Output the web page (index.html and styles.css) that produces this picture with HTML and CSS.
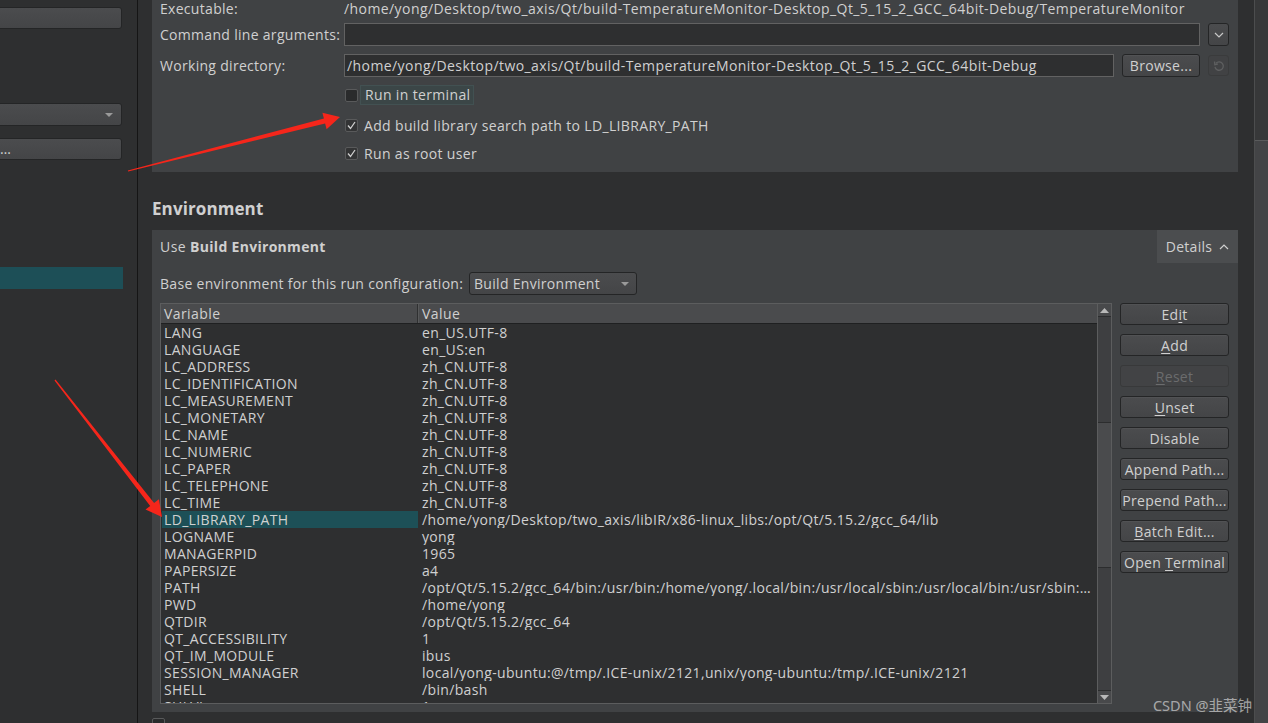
FILE: index.html
```html
<!DOCTYPE html>
<html>
<head>
<meta charset="utf-8">
<link rel="stylesheet" href="styles.css">
</head>
<body>
<div class="app">
  <aside class="side">
    <div class="sbtn s1"></div>
    <div class="scombo"><span class="stri"></span></div>
    <div class="sbtn s2"><span>…</span></div>
    <div class="ssel"></div>
  </aside>
  <main class="main">
    <section class="runpanel">
      <div class="row r1"><span class="lbl">Executable:</span><span class="val">/home/yong/Desktop/two_axis/Qt/build-TemperatureMonitor-Desktop_Qt_5_15_2_GCC_64bit-Debug/TemperatureMonitor</span></div>
      <div class="row r2"><span class="lbl">Command line arguments:</span><div class="input argin"></div><div class="tbtn"><svg width="10" height="6" viewBox="0 0 10 6"><polyline points="1,1 5,5 9,1" fill="none" stroke="#c8c8c8" stroke-width="1.2"/></svg></div></div>
      <div class="row r3"><span class="lbl">Working directory:</span><div class="input dirin">/home/yong/Desktop/two_axis/Qt/build-TemperatureMonitor-Desktop_Qt_5_15_2_GCC_64bit-Debug</div><div class="btn browse"><span>Browse...</span></div><div class="tbtn dis"><svg width="12" height="12" viewBox="0 0 12 12"><path d="M3 3.2 A4.2 4.2 0 1 1 2 7" fill="none" stroke="#5e5f60" stroke-width="1.3"/><polyline points="1.5,1.5 1.8,4.6 4.8,4" fill="none" stroke="#5e5f60" stroke-width="1.3"/></svg></div></div>
      <div class="row chk r4"><span class="box"></span><span class="focus">Run in terminal</span></div>
      <div class="row chk r5"><span class="box on"><svg width="11" height="11" viewBox="0 0 11 11"><polyline points="2,5.5 4.5,8.5 9,2" fill="none" stroke="#d0d0d0" stroke-width="1.3"/></svg></span><span class="ctext">Add build library search path to LD_LIBRARY_PATH</span></div>
      <div class="row chk r6"><span class="box on"><svg width="11" height="11" viewBox="0 0 11 11"><polyline points="2,5.5 4.5,8.5 9,2" fill="none" stroke="#d0d0d0" stroke-width="1.3"/></svg></span><span class="ctext">Run as root user</span></div>
    </section>
    <h2 class="envh">Environment</h2>
    <section class="envpanel">
      <div class="envhead">
        <span class="usebuild">Use <b>Build Environment</b></span>
        <div class="details"><span>Details</span><svg width="10" height="6" viewBox="0 0 10 6"><polyline points="1,5 5,1 9,5" fill="none" stroke="#d0d0d0" stroke-width="1.2"/></svg></div>
      </div>
      <div class="baserow"><span class="baselbl">Base environment for this run configuration:</span><div class="combo"><span>Build Environment</span><span class="tri"></span></div></div>
      <div class="envbody">
        <div class="table">
          <div class="tmain">
            <div class="thead"><div class="c1">Variable</div><div class="c2">Value</div></div>
            <div class="tbody">
              <div class="tr"><div class="c1">LANG</div><div class="c2">en_US.UTF-8</div></div>
              <div class="tr"><div class="c1">LANGUAGE</div><div class="c2">en_US:en</div></div>
              <div class="tr"><div class="c1">LC_ADDRESS</div><div class="c2">zh_CN.UTF-8</div></div>
              <div class="tr"><div class="c1">LC_IDENTIFICATION</div><div class="c2">zh_CN.UTF-8</div></div>
              <div class="tr"><div class="c1">LC_MEASUREMENT</div><div class="c2">zh_CN.UTF-8</div></div>
              <div class="tr"><div class="c1">LC_MONETARY</div><div class="c2">zh_CN.UTF-8</div></div>
              <div class="tr"><div class="c1">LC_NAME</div><div class="c2">zh_CN.UTF-8</div></div>
              <div class="tr"><div class="c1">LC_NUMERIC</div><div class="c2">zh_CN.UTF-8</div></div>
              <div class="tr"><div class="c1">LC_PAPER</div><div class="c2">zh_CN.UTF-8</div></div>
              <div class="tr"><div class="c1">LC_TELEPHONE</div><div class="c2">zh_CN.UTF-8</div></div>
              <div class="tr"><div class="c1">LC_TIME</div><div class="c2">zh_CN.UTF-8</div></div>
              <div class="tr sel"><div class="c1">LD_LIBRARY_PATH</div><div class="c2">/home/yong/Desktop/two_axis/libIR/x86-linux_libs:/opt/Qt/5.15.2/gcc_64/lib</div></div>
              <div class="tr"><div class="c1">LOGNAME</div><div class="c2">yong</div></div>
              <div class="tr"><div class="c1">MANAGERPID</div><div class="c2">1965</div></div>
              <div class="tr"><div class="c1">PAPERSIZE</div><div class="c2">a4</div></div>
              <div class="tr"><div class="c1">PATH</div><div class="c2">/opt/Qt/5.15.2/gcc_64/bin:/usr/bin:/home/yong/.local/bin:/usr/local/sbin:/usr/local/bin:/usr/sbin:…</div></div>
              <div class="tr"><div class="c1">PWD</div><div class="c2">/home/yong</div></div>
              <div class="tr"><div class="c1">QTDIR</div><div class="c2">/opt/Qt/5.15.2/gcc_64</div></div>
              <div class="tr"><div class="c1">QT_ACCESSIBILITY</div><div class="c2">1</div></div>
              <div class="tr"><div class="c1">QT_IM_MODULE</div><div class="c2">ibus</div></div>
              <div class="tr"><div class="c1">SESSION_MANAGER</div><div class="c2">local/yong-ubuntu:@/tmp/.ICE-unix/2121,unix/yong-ubuntu:/tmp/.ICE-unix/2121</div></div>
              <div class="tr"><div class="c1">SHELL</div><div class="c2">/bin/bash</div></div>
              <div class="tr"><div class="c1">SHLVL</div><div class="c2">1</div></div>
            </div>
          </div>
          <div class="vscroll">
            <div class="sarrow"><svg width="9" height="5" viewBox="0 0 9 5"><polygon points="0,5 4.5,0 9,5" fill="#b8b8b8"/></svg></div>
            <div class="shandle"></div>
            <div class="sgap"></div>
            <div class="sarrow"><svg width="9" height="5" viewBox="0 0 9 5"><polygon points="0,0 4.5,5 9,0" fill="#b8b8b8"/></svg></div>
          </div>
        </div>
        <div class="btns">
          <div class="btn"><span>Ed<u>i</u>t</span></div>
          <div class="btn"><span><u>A</u>dd</span></div>
          <div class="btn dis"><span><u>R</u>eset</span></div>
          <div class="btn"><span><u>U</u>nset</span></div>
          <div class="btn"><span>Disable</span></div>
          <div class="btn"><span>Append Path...</span></div>
          <div class="btn"><span>Prepend Path...</span></div>
          <div class="btn"><span><u>B</u>atch Edit...</span></div>
          <div class="btn"><span>Open <u>T</u>erminal</span></div>
        </div>
      </div>
    </section>
    <div class="lastchk"><span class="box"></span></div>
  </main>
  <div class="pscroll"><div class="phandle"></div></div>
</div>
<svg class="arrows" width="1268" height="723" viewBox="0 0 1268 723">
  <polygon fill="#f5261b" points="128.15,171.6 325.1,123.4 326.6,129.2 340,117 322.4,112.7 323.9,118.5 127.85,170.4"/>
  <polygon fill="#f5261b" points="54.5,380.4 150.2,505.9 145.5,509.6 162,517 158.9,499.2 154.1,502.9 55.5,379.6"/>
</svg>
<div class="wm">CSDN @韭菜钟</div>
</body>
</html>
```
FILE: styles.css
```css
* { box-sizing: border-box; margin: 0; padding: 0; }
html, body { width: 1268px; height: 723px; overflow: hidden; background: #2e2f30; }
body {
  font-family: "Open Sans", "Noto Sans", sans-serif;
  font-size: 14px;
  letter-spacing: 0.42px;
  color: #d0d0d0;
  position: relative;
}
.app { display: flex; height: 723px; }

/* left sidebar */
.side {
  width: 138px; flex: none;
  border-right: 1px solid #151515;
  display: flex; flex-direction: column;
  overflow: hidden;
}
.sbtn, .scombo {
  width: 131px; margin-left: -9px; height: 22px;
  border: 1px solid #242526; border-radius: 3px;
  background: linear-gradient(#4b4c4e, #444547);
}
.s1 { margin-top: 7px; }
.scombo { margin-top: 74px; height: 23px; display: flex; justify-content: flex-end; align-items: center; padding-right: 8px; }
.stri, .tri {
  width: 0; height: 0;
  border-left: 4px solid transparent; border-right: 4px solid transparent;
  border-top: 4px solid #9a9a9a;
}
.s2 { margin-top: 12px; display: flex; align-items: center; padding-left: 8px; line-height: 20px; }
.ssel { margin-top: 107px; width: 123px; height: 22px; background: #1d4f57; }

/* main */
.main { flex: 1; padding: 0 16px 0 14px; display: flex; flex-direction: column; overflow: hidden; }
.runpanel {
  background: #404244;
  display: flex; flex-direction: column;
  padding: 0 9px 9px 8px;
}
.row { display: flex; align-items: center; white-space: nowrap; }
.lbl { width: 184px; flex: none; letter-spacing: 0.3px; }
.r1 { margin-top: -3px; height: 22px; }
.r2 { margin-top: 4px; height: 23px; }
.r3 { margin-top: 8px; height: 23px; }
.input {
  height: 23px; background: #2e2f30;
  border: 1px solid #626262;
  display: flex; align-items: center; padding-left: 2px;
}
.argin { width: 856px; }
.dirin { width: 770px; }
.tbtn {
  margin-left: 8px; width: 21px; height: 23px;
  border: 1px solid #242526; border-radius: 3px;
  background: linear-gradient(#4b4c4e, #444547);
  display: flex; align-items: center; justify-content: center;
}
.tbtn.dis { background: #414244; border-color: #3a3b3c; height: 21px; }
.btn {
  height: 22px;
  border: 1px solid #242526; border-radius: 3px;
  background: linear-gradient(#4b4c4e, #444547);
  box-shadow: inset 0 1px 0 #515254;
  display: flex; align-items: center; justify-content: center;
  white-space: nowrap;
  letter-spacing: 0.3px;
}
.btn u { text-decoration-thickness: 1px; text-underline-offset: 2px; }
.btn.dis { background: #424345; border-color: #38393a; box-shadow: none; color: #6b6c6d; }
.browse { margin-left: 8px; width: 78px; height: 23px; }

.chk { height: 20px; padding-left: 185px; }
.r4 { margin-top: 8px; }
.r5 { margin-top: 10px; }
.r6 { margin-top: 8px; }
.box {
  width: 13px; height: 13px; flex: none;
  background: #2a2b2c; border: 1px solid #595a5b; border-radius: 2px;
  display: flex; align-items: center; justify-content: center;
}
.box.on { background: #333435; }
.focus {
  margin-left: 2px; padding: 0 3px 0 4px; height: 20px; line-height: 18px;
  background: #3b4647; border: 1px solid #425152;
  letter-spacing: 0.35px;
}
.ctext { margin-left: 6px; letter-spacing: 0.34px; }

/* environment */
.envh {
  margin-top: 25px; height: 24px; line-height: 24px;
  font-size: 17px; font-weight: 700; letter-spacing: 0.1px;
  margin-bottom: 9px;
}
.envpanel {
  background: #404244;
  display: flex; flex-direction: column;
  padding-bottom: 8px;
}
.envhead { height: 33px; display: flex; justify-content: space-between; align-items: center; padding-left: 8px; }
.usebuild b { font-weight: 700; letter-spacing: 0.3px; }
.details {
  width: 81px; height: 33px; background: #4b4d4f;
  display: flex; align-items: center; justify-content: center; gap: 7px;
  letter-spacing: 0.3px;
}
.baserow { margin-top: 9px; height: 23px; display: flex; align-items: center; padding-left: 8px; white-space: nowrap; }
.baselbl { width: 309px; flex: none; letter-spacing: 0.3px; }
.combo {
  width: 168px; height: 23px;
  border: 1px solid #242526; border-radius: 3px;
  background: linear-gradient(#4b4c4e, #444547);
  display: flex; align-items: center; justify-content: space-between;
  padding: 0 7px 0 4px;
  letter-spacing: 0.3px;
}
.envbody { margin-top: 8px; display: flex; padding: 0 9px 0 8px; }
.table {
  width: 953px; height: 401px;
  border: 1px solid #5c5d5e;
  background: #2e2f30;
  display: flex;
}
.tmain { flex: 1; overflow: hidden; display: flex; flex-direction: column; }
.thead {
  height: 20px; flex: none; display: flex;
  background: #4a4b4d; border-bottom: 1px solid #1f2021;
  line-height: 19px;
}
.thead .c1 { border-right: 1px solid #2f3031; box-shadow: 1px 0 0 #58595a; }
.tbody { flex: 1; overflow: hidden; letter-spacing: 0.34px; }
.tr { display: flex; height: 17px; line-height: 17px; white-space: nowrap; }
.c1 { width: 257px; flex: none; padding-left: 3px; overflow: hidden; }
.c2 { flex: 1; padding-left: 4px; overflow: hidden; }
.tr.sel .c1 { background: #1d5057; margin-left: 1px; padding-left: 2px; width: 256px; }
.vscroll {
  width: 14px; flex: none;
  border-left: 1px solid #5c5d5e;
  background: #3e3f41;
  display: flex; flex-direction: column;
}
.sarrow {
  height: 13px; flex: none;
  display: flex; align-items: center; justify-content: center;
  background: #48494b; border-bottom: 1px solid #2c2d2e;
}
.sarrow:last-child { border-bottom: none; border-top: 1px solid #2c2d2e; }
.shandle {
  margin-top: 105px; height: 146px; flex: none;
  background: #4a4b4d; border-top: 1px solid #2c2d2e; border-bottom: 1px solid #2c2d2e;
}
.sgap { flex: 1; }
.btns { margin-left: 8px; width: 109px; display: flex; flex-direction: column; gap: 9px; }
.lastchk { margin-top: 6px; }
.lastchk .box { width: 13px; height: 13px; }

/* page scrollbar */
.pscroll { width: 14px; flex: none; background: #373839; border-left: 1px solid #4c4d4e; display: flex; flex-direction: column; }
.phandle { margin-top: 140px; flex: 1; background: #434446; border-top: 1px solid #5a5b5c; }

/* overlays */
.arrows { position: absolute; left: 0; top: 0; pointer-events: none; }
.wm {
  position: absolute; right: 16px; bottom: 8px;
  font-family: "Noto Sans", "Noto Sans CJK SC", sans-serif;
  font-size: 14.5px; letter-spacing: 0;
  color: rgba(235, 235, 235, 0.62);
}
```
